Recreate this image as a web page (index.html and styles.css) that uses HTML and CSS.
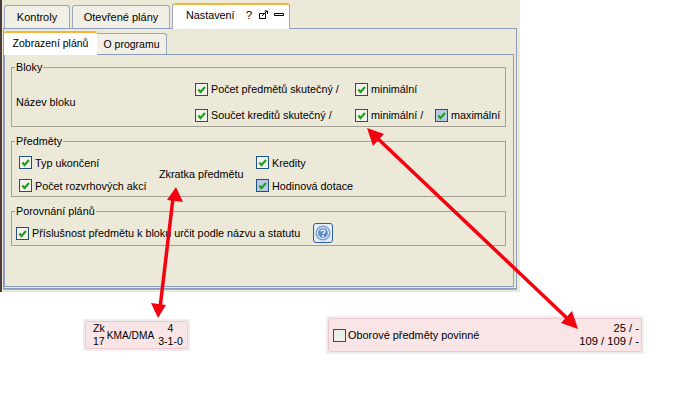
FILE: index.html
```html
<!DOCTYPE html>
<html lang="cs">
<head>
<meta charset="utf-8">
<title>Nastavení</title>
<link rel="stylesheet" href="styles.css">
</head>
<body>
<svg width="0" height="0" class="defs"><defs>
<symbol id="chk" viewBox="0 0 11 11"><path d="M2.300 5.500 4.500 8 9 3" fill="none" stroke="#21a121" stroke-width="2.200"/></symbol>
</defs></svg>
<div class="window">
  <div class="tabs">
    <div class="tab t1">Kontroly</div>
    <div class="tab t2">Otevřené plány</div>
    <div class="tab active t3"><span>Nastavení</span><span class="q">?</span>
      <svg class="ic" width="13" height="10" viewBox="0 0 13 10"><path d="M1.500 3.500h6v5h-6z M4 6 9 1 M6.500 1H9.500V4" fill="none" stroke="#000"/></svg>
      <svg class="ic" width="10" height="4" viewBox="0 0 10 4"><path d="M.5 .5h9v2H.5z" fill="#fff" stroke="#000"/></svg>
    </div>
  </div>
  <div class="panel">
    <div class="subtabs">
      <div class="subtab active s1">Zobrazení plánů</div>
      <div class="subtab s2">O programu</div>
    </div>
    <div class="subpanel">
      <fieldset class="group bloky">
        <legend>Bloky</legend>
        <div class="name">Název bloku</div>
        <label class="c r1 c2nd"><i class="box"><svg><use href="#chk"/></svg></i>Počet předmětů skutečný /</label>
        <label class="c r1 c3rd"><i class="box"><svg><use href="#chk"/></svg></i>minimální</label>
        <label class="c r2 c2nd"><i class="box"><svg><use href="#chk"/></svg></i>Součet kreditů skutečný /</label>
        <label class="c r2 c3rd"><i class="box"><svg><use href="#chk"/></svg></i>minimální /</label>
        <label class="c r2 c4th"><i class="box hover"><svg><use href="#chk"/></svg></i>maximální</label>
      </fieldset>
      <fieldset class="group predmety">
        <legend>Předměty</legend>
        <label class="c r1"><i class="box"><svg><use href="#chk"/></svg></i>Typ ukončení</label>
        <div class="zkr">Zkratka předmětu</div>
        <label class="c r1 c3rd"><i class="box"><svg><use href="#chk"/></svg></i>Kredity</label>
        <label class="c r2"><i class="box"><svg><use href="#chk"/></svg></i>Počet rozvrhových akcí</label>
        <label class="c r2 c3rd"><i class="box hover"><svg><use href="#chk"/></svg></i>Hodinová dotace</label>
      </fieldset>
      <fieldset class="group porovnani">
        <legend>Porovnání plánů</legend>
        <label class="c"><i class="box"><svg><use href="#chk"/></svg></i>Příslušnost předmětu k bloku určit podle názvu a statutu</label>
        <button class="help" type="button">
          <svg width="16" height="16" viewBox="0 0 16 16"><circle cx="8" cy="8" r="7.500" fill="#7d9fd3"/><circle cx="8" cy="8" r="6" fill="#dfe8f5"/><circle cx="8" cy="8" r="4.800" fill="#5f8ac8"/><path d="M6 6.500C6 4.700 10 4.700 10 6.500 10 7.700 8 7.700 8 9" fill="none" stroke="#fff" stroke-width="1.300"/><circle cx="8" cy="11" r=".9" fill="#fff"/></svg>
        </button>
      </fieldset>
    </div>
  </div>
</div>
<div class="samples">
  <div class="wrap w1"><div class="card c1">
    <div class="pair"><span>Zk</span><span>17</span></div>
    <div class="code">KMA/DMA</div>
    <div class="pair mid"><span>4</span><span>3-1-0</span></div>
  </div></div>
  <div class="wrap w2"><div class="card c2">
    <i class="box empty"></i><span class="ob">Oborové předměty povinné</span>
    <div class="pair right"><span>25 / -</span><span>109 / 109 / -</span></div>
  </div></div>
</div>
<svg class="arrows" width="700" height="400" viewBox="0 0 700 400">
  <g stroke="#f5000f" stroke-width="3.500" fill="#f5000f">
    <path d="M173 198 160 308" fill="none"/>
    <path d="M176 187 183 202 167 200z" stroke="none"/>
    <path d="M158 318 151 303 166 305z" stroke="none"/>
    <path d="M374 135 570 321" fill="none"/>
    <path d="M367 128 384 134 373 146z" stroke="none"/>
    <path d="M578 329 561 323 572 311z" stroke="none"/>
  </g>
</svg>
</body>
</html>
```
FILE: styles.css
```css
* { box-sizing: border-box; }
html, body { margin: 0; padding: 0; background: #fff; }
body {
  width: 700px; height: 400px; overflow: hidden; position: relative;
  font-family: "Liberation Sans", "Noto Sans", sans-serif;
  font-size: 10.800px; color: #000;
}
.defs { position: absolute; }
.window {
  width: 520px; height: 292px; background: #ece9d8;
  border-left: 2px solid #4d3a3a;
  padding: 3px 3px 3px 1px;
}
.tabs { display: flex; align-items: flex-end; height: 25px; padding-left: 1px; }
.tab {
  height: 23px; background: #f1efe6;
  border: 1px solid #98a8c0; border-bottom: 0; border-radius: 3px 3px 0 0;
  display: flex; align-items: center; justify-content: center;
  margin-right: 2px; font-size: 11px;
}
.t1 { width: 66px; }
.t2 { width: 98px; }
.tab.active {
  height: 26px; background: #fff; border-top: 2px solid #f5b53c;
  position: relative; top: 1px; justify-content: flex-start;
  padding: 0 0 4px 13px; margin-right: 0; font-size: 10.800px;
}
.t3 { width: 118px; }
.q { margin-left: 11px; margin-right: 6px; font-size: 11.500px; }
.ic { margin-right: 3px; }
.panel {
  height: 261px; border: 1px solid #8b9dbb; box-shadow: 0 1px 0 #a8adb4;
  padding: 2px 2px 3px 0;
}
.subtabs { display: flex; align-items: flex-end; height: 23px; }
.subtab {
  height: 21px; width: 70px; background: #f1efe6;
  border: 1px solid #98a8c0; border-bottom: 0; border-left: 0; border-radius: 0 3px 0 0;
  display: flex; align-items: center; justify-content: center; font-size: 10.500px;
}
.subtab.active {
  width: 93px; height: 24px; background: #fff; border: 0; border-top: 2px solid #f5b53c;
  border-radius: 3px 3px 0 0; position: relative; top: 1px;
  padding-bottom: 3px;
}
.subpanel {
  height: 233px; border: 1px solid #8b9dbb;
  padding: 6px 7px 0 6px;
}
.group {
  margin: 0; padding: 0; border: 1px solid #a5a295; min-width: 0; width: 495px;
}
.group legend { padding: 0 1px; margin-left: -1px; line-height: 13px; }
.predmety legend { margin-left: -4px; }
.c { display: flex; align-items: center; white-space: nowrap; }
.box {
  width: 13px; height: 13px; flex: none; display: block;
  border: 1px solid #1c5180; background: #f3f2ea; margin-right: 3px;
}
.box svg { display: block; width: 11px; height: 11px; }
.box.hover { background: #b9c8e4; }
.box.empty { background: #eeeeea; margin-right: 2px; }
.r1 { grid-row: 1; }
.r2 { grid-row: 2; }
.c2nd { grid-column: 2; }
.c3rd { grid-column: 3; }
.c4th { grid-column: 4; }
.bloky {
  height: 66px; display: grid; align-items: center;
  grid-template-columns: 179px 160px 80px 1fr; grid-template-rows: 26px 26px;
  align-content: start; padding: 2px 0 0 4px;
}
.name { grid-row: 1 / 3; grid-column: 1; }
.predmety {
  height: 62px; margin-top: 8px; display: grid; align-items: center;
  grid-template-columns: 140px 97px 1fr; grid-template-rows: 23px 23px;
  align-content: start; padding: 3px 0 0 7px;
}
.zkr { grid-row: 1 / 3; grid-column: 2; }
.porovnani {
  height: 41px; margin-top: 8px; display: flex; align-items: center;
  padding: 3px 0 0 4px;
}
.help {
  width: 20px; height: 20px; padding: 0; margin: 0 0 0 13px;
  border: 1px solid #2f5f9e; border-radius: 3px;
  background: #e6ecf6; display: flex; align-items: center; justify-content: center;
}
.samples { display: flex; align-items: center; height: 38px; margin-top: 24px; }
.wrap { background: #eee; padding: 2px; }
.w1 { width: 107px; height: 32px; margin-left: 83px; }
.w2 { width: 318px; height: 38px; margin-left: 136px; }
.card {
  height: 100%; background: #f9e4e6; border: 1px solid #eec8d0; border-radius: 3px;
  display: flex; align-items: center; white-space: nowrap;
}
.c1 { padding-left: 7px; }
.c2 { padding: 0 2px 0 4px; }
.pair { display: flex; flex-direction: column; align-items: center; line-height: 13px; font-size: 10.500px; }
.code { margin-left: 2px; font-size: 10.200px; }
.mid { margin-left: 4px; }
.right { margin-left: auto; align-items: flex-end; font-size: 11.200px; }
.ob { font-size: 10.900px; }
.arrows { position: absolute; left: 0; top: 0; pointer-events: none; }
```
